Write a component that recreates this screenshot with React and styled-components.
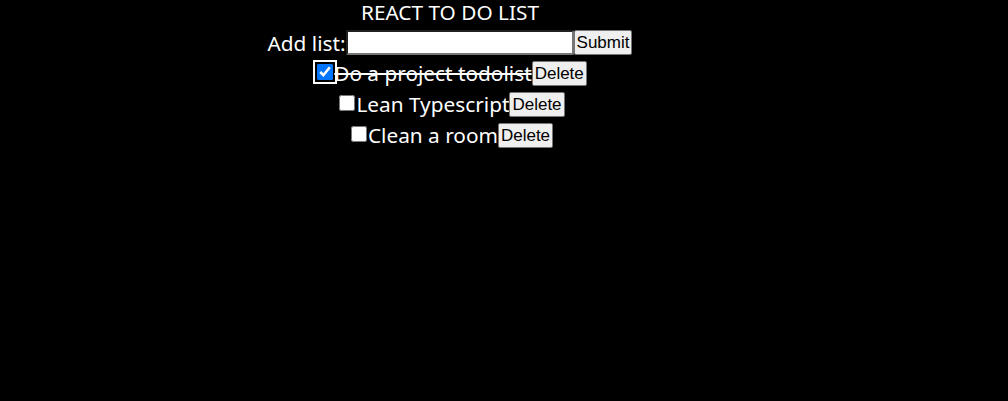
import React, { useState } from "react";
import styled, { createGlobalStyle } from "styled-components";

const GlobalStyle = createGlobalStyle`
  body {
    margin: 0;
    background-color: black;
    color: white;
    font-family: "Noto Sans", "Open Sans", sans-serif;
  }
`;

const Container = styled.div`
  display: flex;
  flex-direction: column;
  align-items: center;
  width: 900px;
  font-size: 20.8px;
`;
const Title = styled.div`
  height: 27px;
  line-height: 25px;
`;
const Row = styled.div`
  display: flex;
  flex-direction: row;
  align-items: center;
  justify-content: center;
  height: 31px;
`;
const ListInput = styled.input`
  box-sizing: border-box;
  width: 228px;
  height: 25px;
  font-size: 16px;
  border: 2px inset #767676;
  border-radius: 2px;
  margin: 0;
  padding: 1px 2px;
  background: white;
`;
const Button = styled.button`
  box-sizing: border-box;
  height: 25px;
  font-family: "Liberation Sans", Arial, sans-serif;
  font-size: 17px;
  color: black;
  background-color: #efefef;
  border: 1px solid #767676;
  border-radius: 2px;
  padding: 1px 2px;
  margin: 0;
`;
const Check = styled.input`
  width: 16px;
  height: 16px;
  margin: 0 1px 4px 4px;
  accent-color: #0075ff;
  outline: ${(props) => (props.focused ? "2px solid white" : "none")};
  outline-offset: 2px;
  border-radius: 3px;
`;
const Label = styled.span`
  text-decoration: ${(props) => (props.done ? "line-through" : "none")};
  line-height: 27px;
`;

function App() {
  const [todos, updateTodos] = useState([
    { text: "Do a project todolist", done: true },
    { text: "Lean Typescript", done: false },
    { text: "Clean a room", done: false },
  ]);
  const [newItem, updateNewItem] = useState("");

  const toggle = (i) => {
    updateTodos(todos.map((t, idx) => (idx === i ? { ...t, done: !t.done } : t)));
  };

  return (
    <Container>
      <GlobalStyle />
      <Title>REACT TO DO LIST</Title>
      <Row>
        Add list:
        <ListInput value={newItem} onChange={(e) => updateNewItem(e.target.value)} />
        <Button>Submit</Button>
      </Row>
      {todos.map((todo, i) => (
        <Row key={todo.text}>
          <Check
            type="checkbox"
            checked={todo.done}
            focused={i === 0}
            onChange={() => toggle(i)}
          />
          <Label done={todo.done}>{todo.text}</Label>
          <Button>Delete</Button>
        </Row>
      ))}
    </Container>
  );
}

export default App;
